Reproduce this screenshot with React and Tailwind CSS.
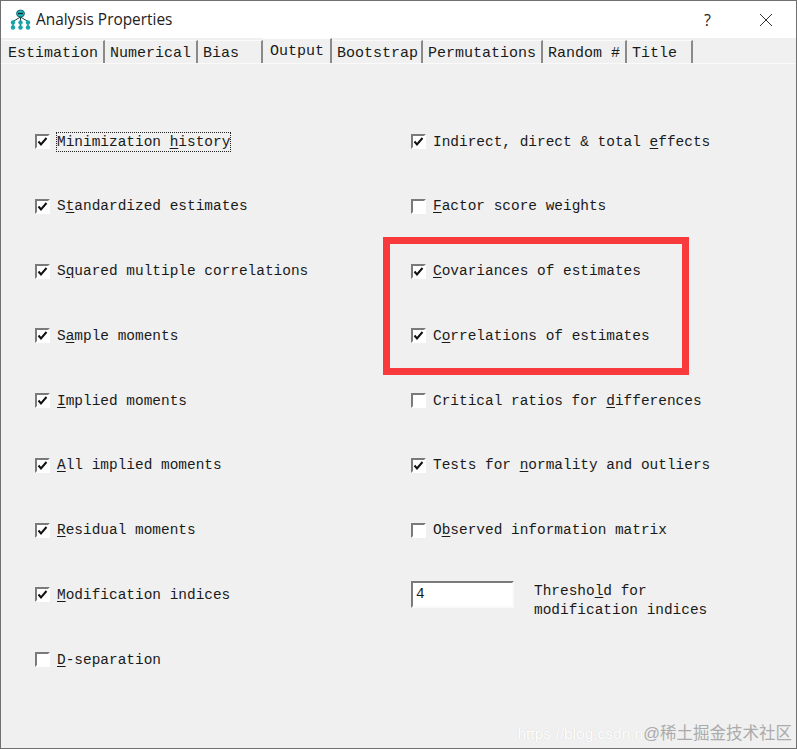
const mono = "font-['Liberation_Mono','Courier_New',monospace] text-[14.45px] text-[#1a1a1a]";
const tabFont = "font-['Liberation_Mono','Courier_New',monospace] text-[15px] text-[#1a1a1a]";

const tabs = [
  { label: 'Estimation', w: 'w-[102px]' },
  { label: 'Numerical', w: 'w-[93px]' },
  { label: 'Bias', w: 'w-[65px]' },
  { label: 'Output', w: 'w-[69px]', active: true },
  { label: 'Bootstrap', w: 'w-[91px]' },
  { label: 'Permutations', w: 'w-[120px]' },
  { label: 'Random #', w: 'w-[84px]' },
  { label: 'Title', w: 'w-[66px]' },
];

// [before, underlined letter, after, checked]
const left = [
  ['Minimization ', 'h', 'istory', true],
  ['S', 't', 'andardized estimates', true],
  ['S', 'q', 'uared multiple correlations', true],
  ['S', 'a', 'mple moments', true],
  ['', 'I', 'mplied moments', true],
  ['', 'A', 'll implied moments', true],
  ['', 'R', 'esidual moments', true],
  ['', 'M', 'odification indices', true],
  ['', 'D', '-separation', false],
];

const right = [
  ['Indirect, direct & total ', 'e', 'ffects', true],
  ['', 'F', 'actor score weights', false],
  ['', 'C', 'ovariances of estimates', true],
  ['C', 'o', 'rrelations of estimates', true],
  ['Critical ratios for ', 'd', 'ifferences', false],
  ['Tests for ', 'n', 'ormality and outliers', true],
  ['O', 'b', 'served information matrix', false],
];

function Check({ item, focused }) {
  const [before, key, after, checked] = item;
  return (
    <div className="flex items-center gap-[7px]">
      <div className="flex h-[15px] w-[15px] shrink-0 items-center justify-center border-2 border-t-[#7a7a7a] border-l-[#7a7a7a] border-r-white border-b-white bg-white">
        {checked && (
          <svg width="11" height="11" viewBox="0 0 11 11">
            <path d="M1.5 5.5 L4 8.5 L9.5 2" fill="none" stroke="#111" strokeWidth="2" />
          </svg>
        )}
      </div>
      <span className={`${mono} whitespace-pre leading-[18px] ${focused ? 'outline-1 outline-dotted outline-[#222]' : ''}`}>
        {before}<span className="underline underline-offset-2">{key}</span>{after}
      </span>
    </div>
  );
}

function AppIcon() {
  return (
    <svg width="21" height="21" viewBox="0 0 21 21" className="shrink-0">
      <path d="M10.5 7V14M10.5 8L3 12.5V15M10.5 8L18 12.5V15M3 15V20M10.5 15V20M18 15V20" fill="none" stroke="#1d3f44" strokeWidth="1" />
      <ellipse cx="10.5" cy="4.5" rx="4" ry="3.5" fill="#20b9c0" stroke="#0c4d52" strokeWidth="0.8" />
      <rect x="8" y="3.8" width="5" height="1.4" fill="#0d2a30" />
      <circle cx="3" cy="13.5" r="2.2" fill="#14a5ab" />
      <circle cx="10.5" cy="13.5" r="2.2" fill="#14a5ab" />
      <circle cx="18" cy="13.5" r="2.2" fill="#14a5ab" />
      <circle cx="3" cy="18.5" r="2.2" fill="#14a5ab" />
      <circle cx="10.5" cy="18.5" r="2.2" fill="#14a5ab" />
      <circle cx="18" cy="18.5" r="2.2" fill="#14a5ab" />
    </svg>
  );
}

export default function App() {
  return (
    <div className="relative flex h-[749px] w-[797px] flex-col overflow-hidden border border-[#707070] bg-[#f0f0f0]">
      <div className="flex h-[37px] shrink-0 items-center bg-white pl-[9px]">
        <AppIcon />
        <span className="ml-[5px] font-['Open_Sans',sans-serif] text-[15.4px] text-[#222]">Analysis Properties</span>
        <span className="ml-auto font-['Open_Sans',sans-serif] text-[16px] text-[#222]">?</span>
        <svg width="14" height="14" viewBox="0 0 14 14" className="ml-[48px] mr-[23px]">
          <path d="M1 1L13 13M13 1L1 13" stroke="#333" strokeWidth="1" />
        </svg>
      </div>

      <div className="flex h-[26px] shrink-0 items-stretch border-b border-[#fafafa] pl-[2px]">
        {tabs.map((t) => (
          <div
            key={t.label}
            className={`${t.w} ${tabFont} shrink-0 border-r-2 border-r-[#8a8a8a] whitespace-pre ${
              t.active
                ? 'border-t border-t-white pt-[4px] pl-[7px] leading-[18px]'
                : 'mt-[2px] border-t border-t-[#fafafa] pt-[4px] pl-[5px] leading-[18px]'
            }`}
          >
            {t.label}
          </div>
        ))}
      </div>

      <div className="grid grid-cols-[376px_1fr] pt-[45.25px] pl-[34px]">
        <div className="grid auto-rows-[64.75px] items-center">
          {left.map((item, i) => (
            <Check key={i} item={item} focused={i === 0} />
          ))}
        </div>
        <div className="grid auto-rows-[64.75px] items-center">
          {right.map((item, i) => (
            <Check key={i} item={item} />
          ))}
          <div className="flex items-center">
            <div className={`${mono} h-[27px] w-[103px] shrink-0 border-2 border-t-[#7a7a7a] border-l-[#7a7a7a] border-r-[#fafafa] border-b-[#fafafa] bg-white pl-[3px] leading-[23px]`}>
              4
            </div>
            <div className={`${mono} ml-[20px] whitespace-pre pt-[12px] leading-[18.5px]`}>
              Thresho<span className="underline underline-offset-2">l</span>d for{'\n'}modification indices
            </div>
          </div>
        </div>
      </div>

      {/* annotation drawn over the dialog */}
      <div className="absolute top-[236px] left-[382px] h-[138px] w-[306px] border-[7px] border-[#f93a3d]" />

      <div className="absolute right-[4px] bottom-[2px] flex items-baseline">
        <span className="font-['Liberation_Sans',sans-serif] text-[15.5px] text-white [text-shadow:0_0_1px_#ccc]">https://blog.csdn.n</span>
        <span className="font-['Liberation_Sans','Noto_Sans_CJK_SC',sans-serif] text-[16.5px] text-[#ababab]">@稀土掘金技术社区</span>
      </div>
    </div>
  );
}
